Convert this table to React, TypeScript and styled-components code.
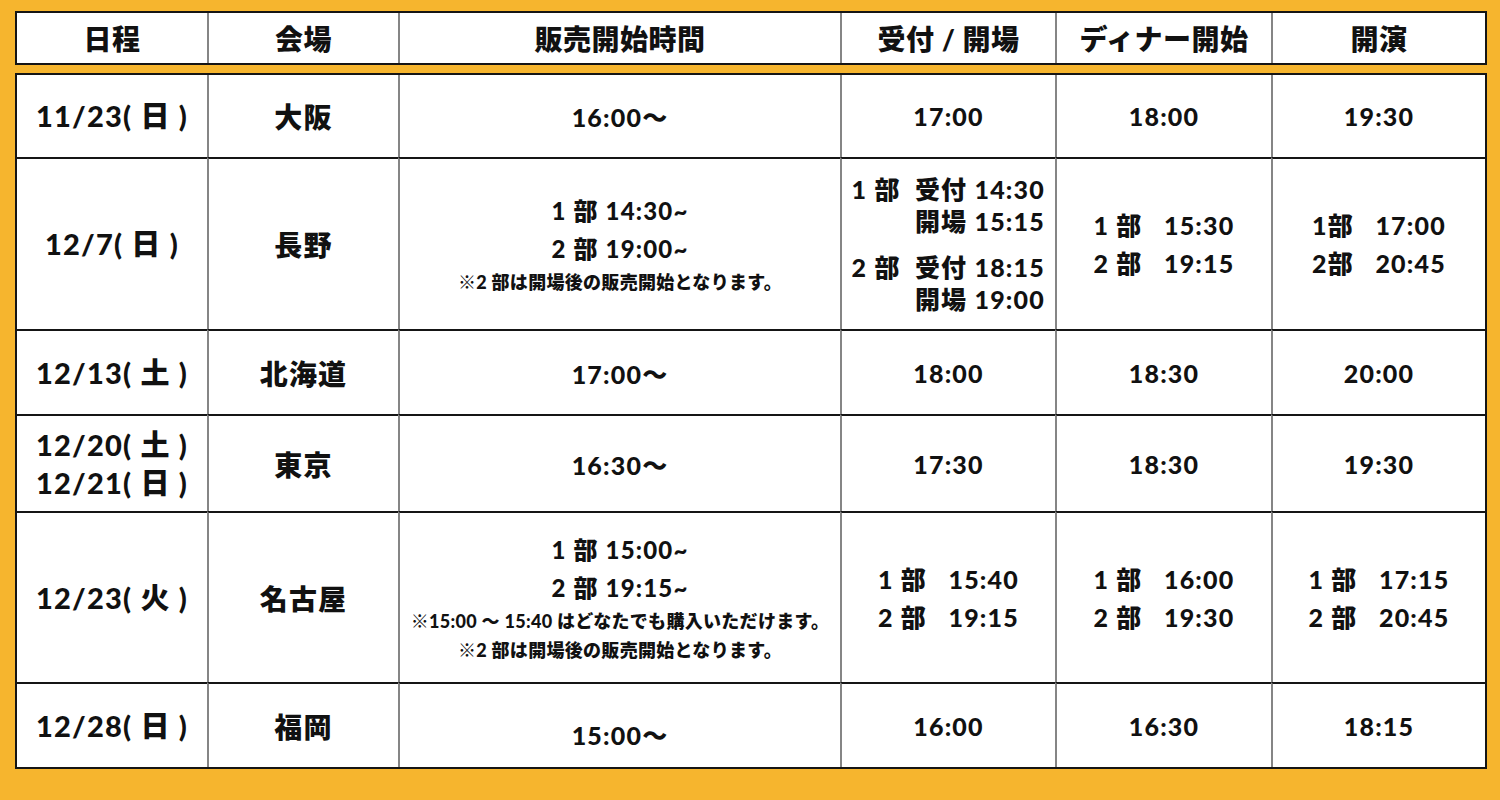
import React from 'react';
import styled, { createGlobalStyle } from 'styled-components';

const GlobalStyle = createGlobalStyle`
  html, body {
    margin: 0;
    padding: 0;
    background: #f6b52e;
  }
  body {
    font-family: "Lato", "Noto Sans CJK JP", "Noto Sans", sans-serif;
    color: #111;
  }
`;

const Page = styled.div`
  width: 1500px;
  height: 800px;
  box-sizing: border-box;
  padding: 11px 13px 0 15px;
  background: #f6b52e;
  display: flex;
  flex-direction: column;
  gap: 8px;
`;

const Table = styled.table`
  width: 1472px;
  table-layout: fixed;
  border-collapse: separate;
  border-spacing: 0;
  border: 2px solid #151515;
  background: #fff;
`;

const Row = styled.tr<{ $h: number }>`
  height: ${(p) => p.$h}px;
`;

const HeadCell = styled.th`
  padding: 0;
  font-size: 28px;
  font-weight: 900;
  text-align: center;
  vertical-align: middle;
  letter-spacing: 0.5px;
  border-left: 2px solid #858585;
  &:first-child {
    border-left: none;
  }
`;

const Cell = styled.td<{ $size?: number; $first?: boolean }>`
  padding: 0 6px;
  font-size: ${(p) => p.$size ?? 25}px;
  font-weight: 900;
  text-align: center;
  vertical-align: middle;
  letter-spacing: 1.2px;
  border-left: 2px solid #858585;
  border-top: ${(p) => (p.$first ? 'none' : '2px solid #151515')};
  &:first-child {
    border-left: none;
  }
`;

const DateText = styled.div`
  font-size: 29px;
  line-height: 38px;
  letter-spacing: 1.2px;
  white-space: nowrap;
`;

const Stack = styled.div`
  display: flex;
  flex-direction: column;
  align-items: center;
`;

const Line = styled.div<{ $size?: number; $lh?: number }>`
  font-size: ${(p) => p.$size ?? 25}px;
  line-height: ${(p) => p.$lh ?? 38}px;
  white-space: pre;
`;

const Note = styled.div`
  font-size: 18px;
  line-height: 29px;
  white-space: nowrap;
  letter-spacing: 0.3px;
`;

const RightBlock = styled.div`
  display: flex;
  flex-direction: column;
  align-items: flex-end;
  gap: 14px;
  padding-right: 4px;
`;

const Group = styled.div`
  display: flex;
  flex-direction: column;
  align-items: flex-end;
`;

const Lower = styled.div`
  padding-top: 16px;
`;

const Pair = ({ a, b }: { a: string; b: string }) => (
  <Stack>
    <Line>{a}</Line>
    <Line>{b}</Line>
  </Stack>
);

const Cols = () => (
  <colgroup>
    <col style={{ width: 190 }} />
    <col style={{ width: 191 }} />
    <col style={{ width: 442 }} />
    <col style={{ width: 215 }} />
    <col style={{ width: 216 }} />
    <col style={{ width: 214 }} />
  </colgroup>
);

const App: React.FC = () => {
  return (
    <>
      <GlobalStyle />
      <Page>
        <Table>
          <Cols />
          <thead>
            <Row $h={50}>
              <HeadCell>日程</HeadCell>
              <HeadCell>会場</HeadCell>
              <HeadCell>販売開始時間</HeadCell>
              <HeadCell>受付 / 開場</HeadCell>
              <HeadCell>ディナー開始</HeadCell>
              <HeadCell>開演</HeadCell>
            </Row>
          </thead>
        </Table>

        <Table>
          <Cols />
          <tbody>
            <Row $h={82}>
              <Cell $first><DateText>11/23( 日 )</DateText></Cell>
              <Cell $first $size={28}>大阪</Cell>
              <Cell $first>16:00〜</Cell>
              <Cell $first>17:00</Cell>
              <Cell $first>18:00</Cell>
              <Cell $first>19:30</Cell>
            </Row>
            <Row $h={172}>
              <Cell><DateText>12/7( 日 )</DateText></Cell>
              <Cell $size={28}>長野</Cell>
              <Cell>
                <Stack>
                  <Line $size={24}>1 部 14:30~</Line>
                  <Line $size={24}>2 部 19:00~</Line>
                  <Note>※2 部は開場後の販売開始となります。</Note>
                </Stack>
              </Cell>
              <Cell>
                <RightBlock>
                  <Group>
                    <Line $lh={32}>1 部  受付 14:30</Line>
                    <Line $lh={32}>開場 15:15</Line>
                  </Group>
                  <Group>
                    <Line $lh={32}>2 部  受付 18:15</Line>
                    <Line $lh={32}>開場 19:00</Line>
                  </Group>
                </RightBlock>
              </Cell>
              <Cell><Pair a="1 部   15:30" b="2 部   19:15" /></Cell>
              <Cell><Pair a="1部   17:00" b="2部   20:45" /></Cell>
            </Row>
            <Row $h={85}>
              <Cell><DateText>12/13( 土 )</DateText></Cell>
              <Cell $size={28}>北海道</Cell>
              <Cell>17:00〜</Cell>
              <Cell>18:00</Cell>
              <Cell>18:30</Cell>
              <Cell>20:00</Cell>
            </Row>
            <Row $h={97}>
              <Cell>
                <DateText>12/20( 土 )</DateText>
                <DateText>12/21( 日 )</DateText>
              </Cell>
              <Cell $size={28}>東京</Cell>
              <Cell>16:30〜</Cell>
              <Cell>17:30</Cell>
              <Cell>18:30</Cell>
              <Cell>19:30</Cell>
            </Row>
            <Row $h={171}>
              <Cell><DateText>12/23( 火 )</DateText></Cell>
              <Cell $size={28}>名古屋</Cell>
              <Cell>
                <Stack>
                  <Line $size={24}>1 部 15:00~</Line>
                  <Line $size={24}>2 部 19:15~</Line>
                  <Note>※15:00 ～ 15:40 はどなたでも購入いただけます。</Note>
                  <Note>※2 部は開場後の販売開始となります。</Note>
                </Stack>
              </Cell>
              <Cell><Pair a="1 部   15:40" b="2 部   19:15" /></Cell>
              <Cell><Pair a="1 部   16:00" b="2 部   19:30" /></Cell>
              <Cell><Pair a="1 部   17:15" b="2 部   20:45" /></Cell>
            </Row>
            <Row $h={85}>
              <Cell><DateText>12/28( 日 )</DateText></Cell>
              <Cell $size={28}>福岡</Cell>
              <Cell><Lower>15:00〜</Lower></Cell>
              <Cell>16:00</Cell>
              <Cell>16:30</Cell>
              <Cell>18:15</Cell>
            </Row>
          </tbody>
        </Table>
      </Page>
    </>
  );
};

export default App;
